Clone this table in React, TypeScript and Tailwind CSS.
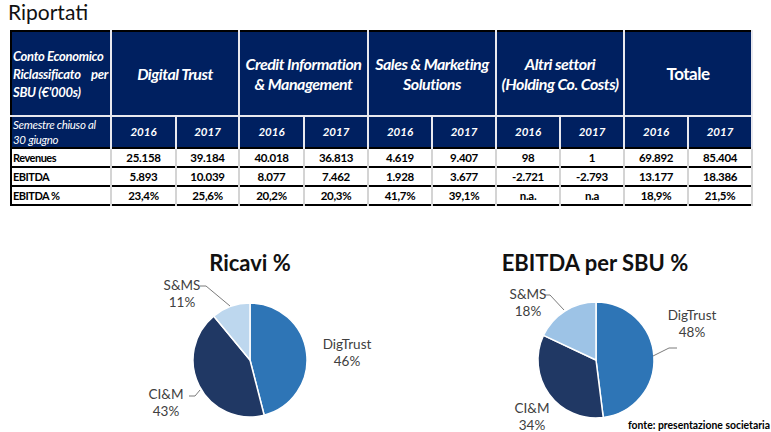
import React from "react";

const groups = [
  { lines: ["Digital Trust"], italic: true },
  { lines: ["Credit Information", "& Management"], italic: true },
  { lines: ["Sales & Marketing", "Solutions"], italic: true },
  { lines: ["Altri settori", "(Holding Co. Costs)"], italic: true },
  { lines: ["Totale"], italic: false },
];

const rows = [
  {
    label: "Revenues",
    values: ["25.158", "39.184", "40.018", "36.813", "4.619", "9.407", "98", "1", "69.892", "85.404"],
  },
  {
    label: "EBITDA",
    values: ["5.893", "10.039", "8.077", "7.462", "1.928", "3.677", "-2.721", "-2.793", "13.177", "18.386"],
  },
  {
    label: "EBITDA %",
    values: ["23,4%", "25,6%", "20,2%", "20,3%", "41,7%", "39,1%", "n.a.", "n.a", "18,9%", "21,5%"],
  },
];

const colWidths = [100, 65, 63, 65, 64, 64, 64, 64, 64, 64, 64];

const slicePath = (cx: number, cy: number, r: number, a0: number, a1: number) => {
  const pt = (a: number) => [cx + r * Math.sin(a * 2 * Math.PI), cy - r * Math.cos(a * 2 * Math.PI)];
  const [x0, y0] = pt(a0);
  const [x1, y1] = pt(a1);
  const large = a1 - a0 > 0.5 ? 1 : 0;
  return `M${cx} ${cy} L${x0} ${y0} A${r} ${r} 0 ${large} 1 ${x1} ${y1} Z`;
};

type Label = { x: number; y: number; name: string; pct: string };

const PieChart = ({
  viewBox,
  width,
  cx,
  cy,
  r,
  slices,
  labels,
  leaders,
  children,
}: {
  viewBox: string;
  width: number;
  cx: number;
  cy: number;
  r: number;
  slices: { v: number; color: string }[];
  labels: Label[];
  leaders: string[];
  children?: React.ReactNode;
}) => {
  let acc = 0;
  return (
    <svg width={width} height={158} viewBox={viewBox} className="overflow-visible">
      {slices.map((s, i) => {
        const a0 = acc;
        acc += s.v;
        return (
          <path
            key={i}
            d={slicePath(cx, cy, r, a0, acc)}
            fill={s.color}
            stroke="#ffffff"
            strokeWidth={1.5}
            strokeLinejoin="round"
          />
        );
      })}
      {leaders.map((pts, i) => (
        <polyline key={i} points={pts} fill="none" stroke="#595959" strokeWidth={0.8} />
      ))}
      {labels.map((l, i) => (
        <text
          key={i}
          x={l.x}
          y={l.y}
          textAnchor="middle"
          fontFamily="Lato, sans-serif"
          fontSize={13.5}
          fill="#404040"
        >
          <tspan x={l.x}>{l.name}</tspan>
          <tspan x={l.x} dy={17}>
            {l.pct}
          </tspan>
        </text>
      ))}
      {children}
    </svg>
  );
};

export default function App() {
  return (
    <div className="w-[771px] h-[432px] bg-white overflow-hidden [font-family:Lato,sans-serif] text-black">
      <div className="pl-2 h-[24px] text-[21px] leading-[24px] text-[#111]">Riportati</div>

      <div className="ml-[10px] mt-[6px]">
        <table className="table-fixed border-collapse border-2 border-black w-[741px]">
          <colgroup>
            {colWidths.map((w, i) => (
              <col key={i} style={{ width: w }} />
            ))}
          </colgroup>
          <thead>
            <tr className="h-[85px] bg-[#002060] text-white">
              <th className="border-r-2 border-b-2 border-[#e8e8ee] pl-[1px] text-left align-middle font-bold italic text-[13px] leading-[18px] tracking-[-0.3px]">
                <div>Conto Economico</div>
                <div className="flex justify-between pr-[2px]">
                  <span>Riclassificato</span>
                  <span>per</span>
                </div>
                <div>SBU (€'000s)</div>
              </th>
              {groups.map((g, i) => (
                <th
                  key={i}
                  colSpan={2}
                  className={`border-r-2 border-b-2 border-[#e8e8ee] text-center font-bold leading-[20px] tracking-[-0.5px] ${
                    g.italic ? "italic text-[16px]" : "not-italic text-[17px]"
                  }`}
                >
                  {g.lines.map((l) => (
                    <div key={l}>{l}</div>
                  ))}
                </th>
              ))}
            </tr>
            <tr className="h-[30px] bg-[#002060] text-white">
              <th className="border-r-2 border-[#e8e8ee] pl-[1px] text-left font-normal italic text-[11.5px] leading-[15px] tracking-[-0.3px]">
                <div>Semestre chiuso al</div>
                <div>30 giugno</div>
              </th>
              {Array.from({ length: 10 }).map((_, i) => (
                <th
                  key={i}
                  className="border-r-2 border-[#e8e8ee] text-center font-bold italic text-[11.5px]"
                >
                  {i % 2 === 0 ? "2016" : "2017"}
                </th>
              ))}
            </tr>
          </thead>
          <tbody>
            {rows.map((row) => (
              <tr key={row.label} className="h-[19px] border-t-2 border-black">
                <td className="border-r-2 border-[#d4d4d4] pl-[1px] text-left font-bold text-[11px] tracking-[-0.5px] leading-[15px]">
                  {row.label}
                </td>
                {row.values.map((v, i) => (
                  <td
                    key={i}
                    className="border-r-2 border-[#d4d4d4] text-center font-bold text-[11.5px] tracking-[-0.3px] leading-[15px]"
                  >
                    {v}
                  </td>
                ))}
              </tr>
            ))}
          </tbody>
        </table>
      </div>

      <div className="flex gap-[110px] pl-[130px] mt-[44px]">
        <div className="w-[240px] flex flex-col">
          <div className="text-center font-bold text-[22px] leading-[26px] text-[#111]">Ricavi %</div>
          <PieChart
            viewBox="130 274 240 158"
            width={240}
            cx={250}
            cy={358}
            r={57}
            slices={[
              { v: 0.46, color: "#2e75b6" },
              { v: 0.43, color: "#203864" },
              { v: 0.11, color: "#bdd7ee" },
            ]}
            labels={[
              { x: 182, y: 288, name: "S&MS", pct: "11%" },
              { x: 347, y: 347, name: "DigTrust", pct: "46%" },
              { x: 166, y: 397, name: "CI&M", pct: "43%" },
            ]}
            leaders={["200,284 206,284 230,304", "189,394 195,394 200,388"]}
          />
        </div>
        <div className="w-[291px] flex flex-col">
          <div className="w-[230px] text-center font-bold text-[22px] leading-[26px] text-[#111]">
            EBITDA per SBU %
          </div>
          <PieChart
            viewBox="480 274 291 158"
            width={291}
            cx={596}
            cy={358}
            r={58}
            slices={[
              { v: 0.48, color: "#2e75b6" },
              { v: 0.34, color: "#203864" },
              { v: 0.18, color: "#9dc3e6" },
            ]}
            labels={[
              { x: 528, y: 297, name: "S&MS", pct: "18%" },
              { x: 692, y: 318, name: "DigTrust", pct: "48%" },
              { x: 532, y: 411, name: "CI&M", pct: "34%" },
            ]}
            leaders={["545,293 550,293 564,308", "653,354 669,346 677,346"]}
          >
            <text
              x={628}
              y={427}
              fontFamily="Lato, sans-serif"
              fontSize={10.5}
              fontWeight={700}
              fill="#000"
              textLength={142}
              lengthAdjust="spacingAndGlyphs"
            >
              fonte: presentazione societaria
            </text>
          </PieChart>
        </div>
      </div>
    </div>
  );
}
